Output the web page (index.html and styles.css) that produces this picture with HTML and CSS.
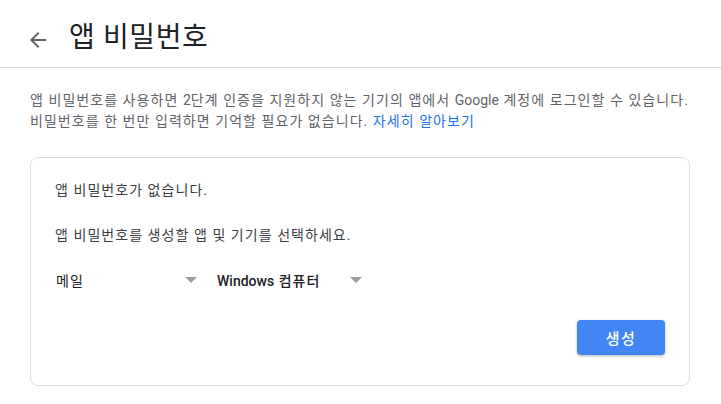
FILE: index.html
```html
<!DOCTYPE html>
<html lang="ko">
<head>
<meta charset="utf-8">
<title>앱 비밀번호</title>
<link rel="stylesheet" href="styles.css">
</head>
<body>
<header class="topbar">
  <span class="back" aria-label="뒤로">
    <svg width="16" height="16" viewBox="0 0 16 16"><path d="M16 7H3.83l5.59-5.59L8 0 0 8l8 8 1.41-1.41L3.83 9H16z" fill="#5f6368"/></svg>
  </span>
  <h1 class="title">앱 비밀번호</h1>
</header>
<main class="content">
  <p class="desc">앱 비밀번호를 사용하면 <span class="latin">2</span>단계 인증을 지원하지 않는 기기의 앱에서 <span class="latin">Google</span> 계정에 로그인할 수 있습니다.<br>비밀번호를 한 번만 입력하면 기억할 필요가 없습니다. <a class="link" href="#">자세히 알아보기</a></p>
  <section class="card">
    <p class="card-text first">앱 비밀번호가 없습니다.</p>
    <p class="card-text">앱 비밀번호를 생성할 앱 및 기기를 선택하세요.</p>
    <div class="selects">
      <div class="select"><span class="select-label">메일</span><span class="caret"></span></div>
      <div class="select wide"><span class="select-label strong"><span class="latin">Windows</span> 컴퓨터</span><span class="caret"></span></div>
    </div>
    <div class="actions">
      <button class="btn" type="button">생성</button>
    </div>
  </section>
</main>
</body>
</html>
```
FILE: styles.css
```css
html, body {
  margin: 0;
  padding: 0;
  background: #ffffff;
}
body {
  font-family: Roboto, "Noto Sans CJK KR", sans-serif;
  color: #202124;
  letter-spacing: 1.05px;
}
.latin {
  letter-spacing: 0;
}
.topbar {
  height: 67px;
  border-bottom: 1px solid #dadce0;
  display: flex;
  align-items: center;
  padding-left: 30px;
  padding-top: 12px;
  box-sizing: border-box;
  height: 68px;
}
.back {
  display: flex;
  width: 16px;
  height: 16px;
  margin-right: 23px;
}
.title {
  margin: 0;
  font-size: 28px;
  font-weight: 400;
  line-height: 36px;
  color: #202124;
  letter-spacing: 0.6px;
  margin-top: -3px;
}
.content {
  padding: 0 31px 0 30px;
}
.desc {
  margin: 22px 0 0;
  font-size: 14px;
  line-height: 21px;
  color: #5f6368;
}
.link {
  color: #1a73e8;
  text-decoration: none;
}
.card {
  margin-top: 25px;
  border: 1px solid #dadce0;
  border-radius: 8px;
  padding: 22px 24px 30px 24px;
  box-sizing: border-box;
  height: 229px;
}
.card-text {
  margin: 0 0 25px;
  font-size: 14px;
  line-height: 20px;
  color: #3c4043;
}
.card-text + .card-text {
  margin-bottom: 17px;
}
.selects {
  display: flex;
  gap: 12px;
}
.select {
  width: 150px;
  height: 36px;
  display: flex;
  align-items: center;
  justify-content: space-between;
  padding: 0 8px 0 1px;
  box-sizing: border-box;
}
.select.wide {
  width: 153px;
  padding-left: 0;
}
.select-label {
  font-size: 14px;
  color: #202124;
}
.select-label.strong {
  font-weight: 500;
}
.caret {
  width: 0;
  height: 0;
  border-left: 6px solid transparent;
  border-right: 6px solid transparent;
  border-top: 6px solid #9e9e9e;
}
.actions {
  display: flex;
  justify-content: flex-end;
  margin-top: 22px;
}
.btn {
  width: 88px;
  height: 35px;
  border: none;
  border-radius: 4px;
  background: #4285f4;
  color: #ffffff;
  font-family: Roboto, "Noto Sans CJK KR", sans-serif;
  font-size: 15px;
  font-weight: 500;
  letter-spacing: 1.5px;
  box-shadow: 0 1px 3px rgba(0,0,0,0.3);
  cursor: pointer;
}
```
